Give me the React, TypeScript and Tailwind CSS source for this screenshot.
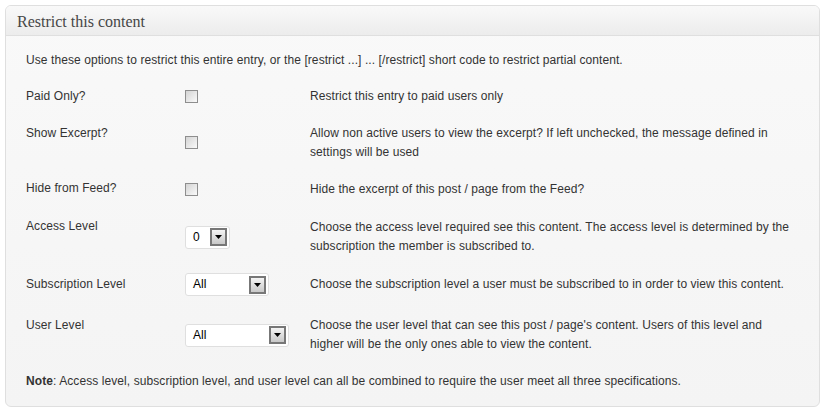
const rows = [
  { label: 'Paid Only?', kind: 'check', h: 'h-[37px]', desc: ['Restrict this entry to paid users only'] },
  {
    label: 'Show Excerpt?',
    kind: 'check',
    h: 'h-[55px]',
    desc: ['Allow non active users to view the excerpt? If left unchecked, the message defined in', 'settings will be used'],
  },
  { label: 'Hide from Feed?', kind: 'check', h: 'h-[38px]', desc: ['Hide the excerpt of this post / page from the Feed?'] },
  {
    label: 'Access Level',
    kind: 'access',
    h: 'h-[58px]',
    desc: ['Choose the access level required see this content. The access level is determined by the', 'subscription the member is subscribed to.'],
  },
  {
    label: 'Subscription Level',
    kind: 'sub',
    h: 'h-[37px] mb-[4px]',
    desc: ['Choose the subscription level a user must be subscribed to in order to view this content.'],
  },
  {
    label: 'User Level',
    kind: 'user',
    h: 'h-[56px]',
    desc: ["Choose the user level that can see this post / page's content. Users of this level and", 'higher will be the only ones able to view the content.'],
  },
];

function Checkbox() {
  return <div className="w-[13px] h-[13px] border border-[#8e8e8e] bg-gradient-to-br from-[#d4d4d4] to-[#fafafa]" />;
}

function Select({ value, width }: { value: string; width: string }) {
  return (
    <div className={`${width} h-[23px] bg-white border border-[#dfdfdf] rounded-[3px] flex items-center justify-between pl-[7px] pr-[2px]`}>
      <span className="text-[12px] text-black">{value}</span>
      <div className="w-[17px] h-[18px] border-2 border-[#777] bg-gradient-to-b from-[#f4f4f4] to-[#c8c8c8] flex items-center justify-center">
        <svg width="7" height="4" viewBox="0 0 7 4">
          <path d="M0 0h7L3.5 4z" fill="#000" />
        </svg>
      </div>
    </div>
  );
}

export default function App() {
  return (
    <div className="w-[825px] h-[412px] bg-white pt-[5px] px-[5px]" style={{ fontFamily: '"Liberation Sans", Arial, sans-serif' }}>
      <div className="w-[815px] h-[402px] border border-[#dfdfdf] rounded-[6px] overflow-hidden bg-gradient-to-b from-[#f9f9f9] to-[#f4f4f4] text-[12px] leading-[19px] text-[#333] tracking-[0.08px]">
        <div className="h-[30px] border-b border-[#dfdfdf] bg-gradient-to-b from-[#f9f9f9] to-[#ececec] flex items-center pl-[11px] pt-[1px]">
          <h3 className="text-[16px] text-[#464646] tracking-normal" style={{ fontFamily: '"Liberation Serif", Georgia, serif' }}>
            Restrict this content
          </h3>
        </div>
        <div className="pl-[20px] pt-[15px]">
          <p>Use these options to restrict this entire entry, or the [restrict ...] ... [/restrict] short code to restrict partial content.</p>
          <div className="mt-[8px]">
            {rows.map((r) => (
              <div key={r.label} className={`flex items-center ${r.h}`}>
                <div className="w-[159px] self-start pt-[9px]">{r.label}</div>
                <div className="w-[125px]">
                  {r.kind === 'check' && <Checkbox />}
                  {r.kind === 'access' && <Select value="0" width="w-[45px]" />}
                  {r.kind === 'sub' && <Select value="All" width="w-[84px]" />}
                  {r.kind === 'user' && <Select value="All" width="w-[104px]" />}
                </div>
                <div>
                  {r.desc.map((d) => (
                    <div key={d}>{d}</div>
                  ))}
                </div>
              </div>
            ))}
          </div>
          <p className="mt-[9px]">
            <b>Note</b>: Access level, subscription level, and user level can all be combined to require the user meet all three specifications.
          </p>
        </div>
      </div>
    </div>
  );
}
